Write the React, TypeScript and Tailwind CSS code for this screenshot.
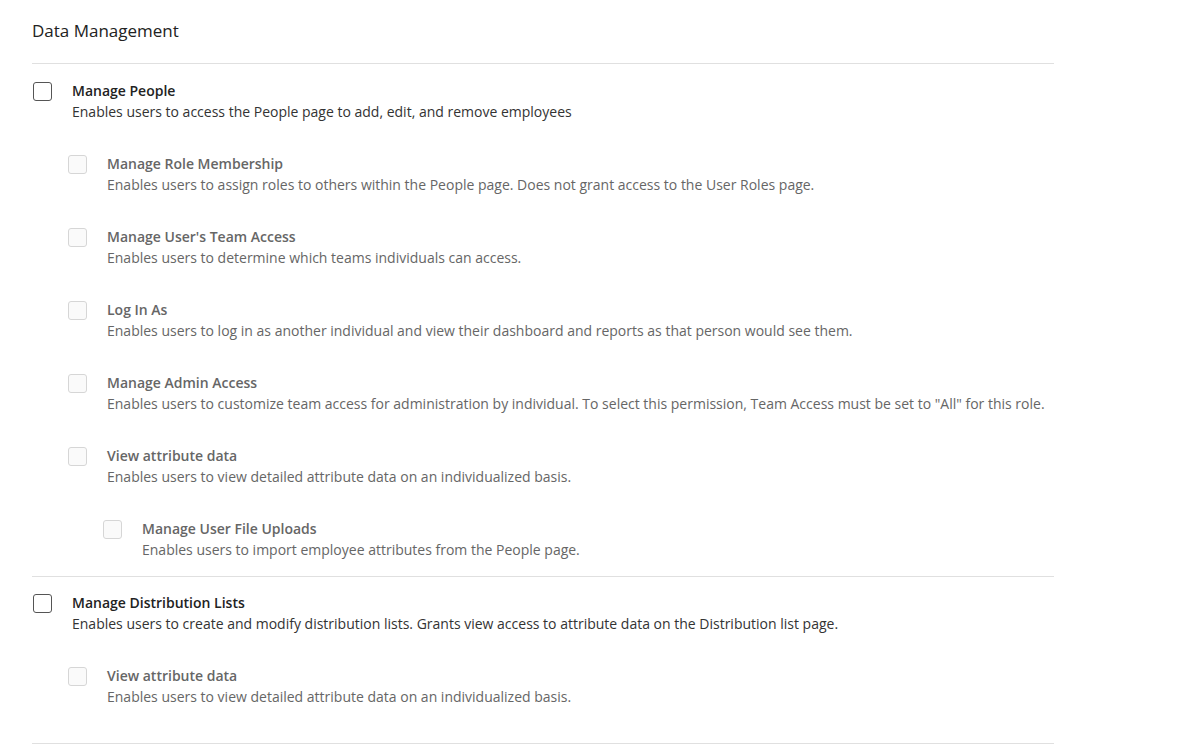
type Perm = {
  title: string;
  desc: string;
  level: number;
};

const groups: { pad: string; items: Perm[] }[] = [
  {
    pad: 'pt-[16px] pb-[16px]',
    items: [
      { level: 0, title: 'Manage People', desc: 'Enables users to access the People page to add, edit, and remove employees' },
      { level: 1, title: 'Manage Role Membership', desc: 'Enables users to assign roles to others within the People page. Does not grant access to the User Roles page.' },
      { level: 1, title: "Manage User's Team Access", desc: 'Enables users to determine which teams individuals can access.' },
      { level: 1, title: 'Log In As', desc: 'Enables users to log in as another individual and view their dashboard and reports as that person would see them.' },
      { level: 1, title: 'Manage Admin Access', desc: 'Enables users to customize team access for administration by individual. To select this permission, Team Access must be set to "All" for this role.' },
      { level: 1, title: 'View attribute data', desc: 'Enables users to view detailed attribute data on an individualized basis.' },
      { level: 2, title: 'Manage User File Uploads', desc: 'Enables users to import employee attributes from the People page.' },
    ],
  },
  {
    pad: 'pt-[15px] pb-[36px]',
    items: [
      { level: 0, title: 'Manage Distribution Lists', desc: 'Enables users to create and modify distribution lists. Grants view access to attribute data on the Distribution list page.' },
      { level: 1, title: 'View attribute data', desc: 'Enables users to view detailed attribute data on an individualized basis.' },
    ],
  },
];

function Row({ item }: { item: Perm }) {
  const indent = item.level === 0 ? 'pl-px' : item.level === 1 ? 'pl-[36px]' : 'pl-[71px]';
  const top = item.level === 0;
  return (
    <div className={`flex items-start ${indent}`}>
      <div
        className={
          top
            ? 'mt-[2px] h-[19px] w-[19px] shrink-0 rounded-[3px] border border-[#555] bg-white'
            : 'mt-[2px] h-[19px] w-[19px] shrink-0 rounded-[3px] border border-[#d6d6d6] bg-[#fafafa]'
        }
      />
      <div className="ml-[20px]">
        <div className={top ? 'text-[14px] leading-[21px] font-semibold text-[#222]' : 'text-[14px] leading-[21px] font-semibold text-[#666]'}>
          {item.title}
        </div>
        <div className={top ? 'text-[14px] leading-[21px] text-[#333]' : 'text-[14px] leading-[21px] text-[#666]'}>
          {item.desc}
        </div>
      </div>
    </div>
  );
}

export default function App() {
  return (
    <div className="min-h-screen bg-white pl-[32px] pt-[19px]" style={{ fontFamily: '"Open Sans", "Noto Sans", sans-serif' }}>
      <div className="w-[1022px]">
        <h2 className="text-[17px] leading-[24px] text-[#222] pb-[20px] border-b border-[#e0e0e0]">Data Management</h2>
        {groups.map((g, gi) => (
          <div key={gi} className={`flex flex-col gap-[31px] border-b border-[#e0e0e0] ${g.pad}`}>
            {g.items.map((it, i) => (
              <Row key={i} item={it} />
            ))}
          </div>
        ))}
      </div>
    </div>
  );
}
